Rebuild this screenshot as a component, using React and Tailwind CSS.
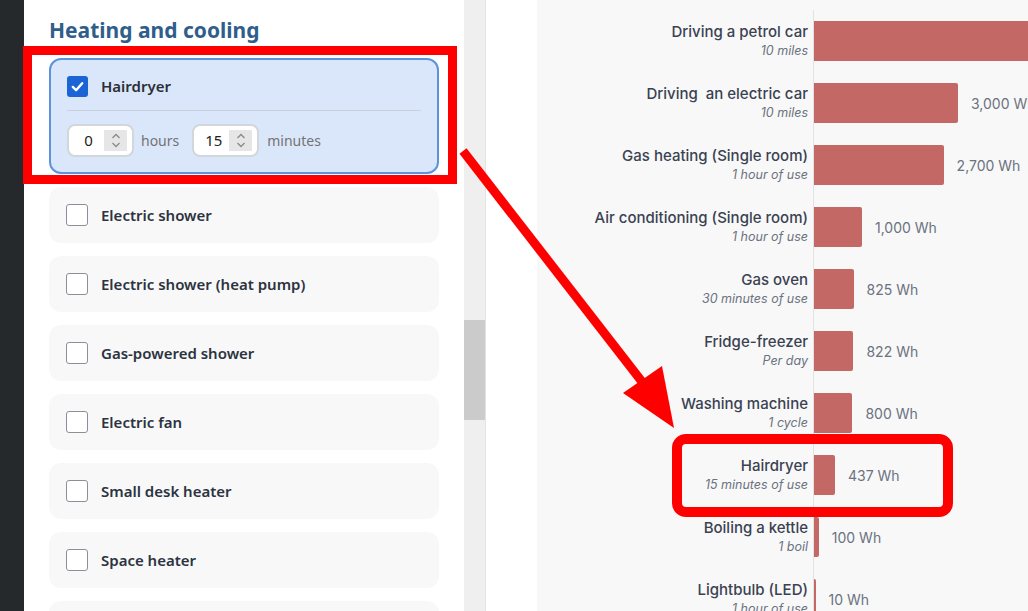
import React from 'react'

const items = [
  'Electric shower',
  'Electric shower (heat pump)',
  'Gas-powered shower',
  'Electric fan',
  'Small desk heater',
  'Space heater',
  'Oil-filled radiator',
]

const rows = [
  { title: 'Driving a petrol car', sub: '10 miles', wh: 9000 },
  { title: 'Driving\u00a0 an electric car', sub: '10 miles', wh: 3000 },
  { title: 'Gas heating (Single room)', sub: '1 hour of use', wh: 2700 },
  { title: 'Air conditioning (Single room)', sub: '1 hour of use', wh: 1000 },
  { title: 'Gas oven', sub: '30 minutes of use', wh: 825 },
  { title: 'Fridge-freezer', sub: 'Per day', wh: 822 },
  { title: 'Washing machine', sub: '1 cycle', wh: 800 },
  { title: 'Hairdryer', sub: '15 minutes of use', wh: 437 },
  { title: 'Boiling a kettle', sub: '1 boil', wh: 100 },
  { title: 'Lightbulb (LED)', sub: '1 hour of use', wh: 10 },
]

function Spinner() {
  return (
    <div className="w-[23px] h-[21px] bg-[#e6e6e6] flex items-center justify-center">
      <svg width="12" height="17" viewBox="0 0 12 17" fill="none" stroke="#8a8a8a" strokeWidth="1.3">
        <path d="M2.5 6 L6 2.5 L9.5 6" />
        <path d="M2.5 11 L6 14.5 L9.5 11" />
      </svg>
    </div>
  )
}

function NumberBox({ value }) {
  return (
    <div className="w-[67px] h-[33px] bg-white border-2 border-[#d3d6da] rounded-[8px] flex items-center pl-[4px] pr-[5px]">
      <span className="flex-1 text-center text-[15px] text-[#222]">{value}</span>
      <Spinner />
    </div>
  )
}

function App() {
  return (
    <div className="relative w-[1028px] h-[611px] overflow-hidden flex bg-white" style={{ fontFamily: '"Noto Sans", sans-serif' }}>
      <div className="w-[24px] bg-[#25292c]" />

      <div className="w-[440px] pl-[25px] pr-[25px]">
        <h2 className="mt-[16px] text-[21px] leading-[28px] font-bold text-[#2f5e8b]">Heating and cooling</h2>

        <div className="mt-[14px] flex flex-col gap-[13px]">
          <div className="w-[390px] border-2 border-[#5b93dc] bg-[#dae7fa] rounded-[12px] px-[16px] pt-[16px] pb-[15px]">
            <div className="flex items-center gap-[13px] h-[21px]">
              <div className="w-[21px] h-[21px] rounded-[3px] bg-[#1a64d6] flex items-center justify-center">
                <svg width="15" height="15" viewBox="0 0 16 16" fill="none" stroke="white" strokeWidth="2.6" strokeLinecap="round" strokeLinejoin="round">
                  <path d="M3 8.5 L6.5 12 L13 4.5" />
                </svg>
              </div>
              <span className="text-[15px] font-semibold text-[#2b2f38]">Hairdryer</span>
            </div>
            <div className="mt-[13px] h-px bg-[#c9d0d9]" />
            <div className="mt-[13px] flex items-center h-[33px]">
              <NumberBox value="0" />
              <span className="ml-[7px] text-[14px] text-[#737373]">hours</span>
              <div className="ml-[13px]"><NumberBox value="15" /></div>
              <span className="ml-[8px] text-[14px] text-[#737373]">minutes</span>
            </div>
          </div>

          {items.map((name) => (
            <div key={name} className="w-[390px] h-[56px] bg-[#f8f8f9] rounded-[12px] flex items-center pl-[17px] gap-[13px]">
              <div className="w-[22px] h-[22px] rounded-[3px] border-[1.5px] border-[#8e8e98] bg-white" />
              <span className="text-[15px] font-semibold text-[#2c3340]">{name}</span>
            </div>
          ))}
        </div>
      </div>

      <div className="w-[22px] bg-[#efefef] border-r border-[#e3e3e3] flex flex-col">
        <div className="mt-[320px] h-[100px] w-[21px] bg-[#cbcbcb]" />
      </div>

      <div className="w-[51px] bg-white" />

      <div className="flex-1 bg-[#f8f8f8] pt-[10px] overflow-hidden" style={{ fontFamily: 'Inter, sans-serif' }}>
        {rows.map((r) => (
          <div key={r.title} className="flex h-[62px]">
            <div className="w-[276px] shrink-0 pr-[5px] pt-[12px] text-right">
              <div className="text-[15px] leading-[20px] font-medium text-[#3a4252] whitespace-nowrap">{r.title}</div>
              <div className="text-[12.5px] leading-[18px] italic text-[#6b7280] whitespace-nowrap">{r.sub}</div>
            </div>
            <div className="flex items-center border-l border-[#e2e2e2] whitespace-nowrap">
              <div className="h-[40px] bg-[#c36865] rounded-r-[2px] shrink-0" style={{ width: Math.max(r.wh * 0.048, 1.5) }} />
              <span className="ml-[13px] text-[14px] text-[#6b7280]">{r.wh.toLocaleString('en-US')} Wh</span>
            </div>
          </div>
        ))}
      </div>

      <div className="absolute left-[23px] top-[46px] w-[434px] h-[138px] border-[9px] border-[#ff0000]" />
      <div className="absolute left-[672px] top-[434px] w-[281px] h-[83px] border-[10px] border-[#ff0000] rounded-[14px]" />

      <svg className="absolute left-0 top-0 pointer-events-none" width="1028" height="611">
        <line x1="463" y1="151" x2="643" y2="383" stroke="#ff0000" strokeWidth="9" />
        <polygon points="623,393 662,366 674,428" fill="#ff0000" />
      </svg>
    </div>
  )
}

export default App
